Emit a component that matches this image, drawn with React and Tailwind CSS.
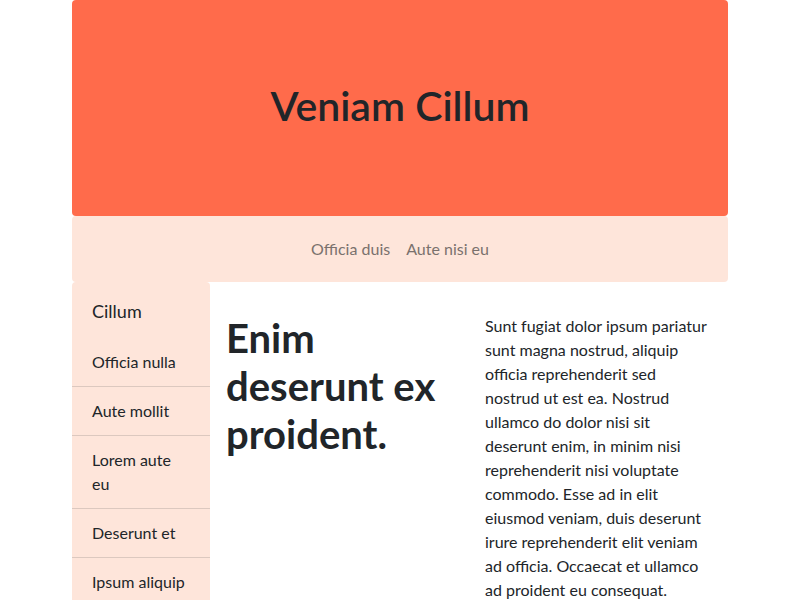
const navLinks = ["Officia duis", "Aute nisi eu"];
const sideItems = ["Officia nulla", "Aute mollit", "Lorem aute eu", "Deserunt et", "Ipsum aliquip"];

export default function App() {
    return (
        <div className="min-h-screen bg-white text-[#212529] font-['Lato','Liberation_Sans',sans-serif]">
            <div className="mx-auto w-[656px]">
                <header className="h-[216px] rounded bg-[#ff6b4b] flex items-center justify-center">
                    <h1 className="text-[41px] font-semibold leading-[1.2] -mt-1">Veniam Cillum</h1>
                </header>
                <nav className="h-[66px] rounded bg-[#fee5da] flex items-center justify-center gap-4">
                    {navLinks.map(link => (
                        <a key={link} href="#" className="text-[#7a716d] text-base">{link}</a>
                    ))}
                </nav>
                <div className="flex">
                    <aside className="w-[138px] shrink-0 rounded bg-[#fee5da]">
                        <div className="px-5 pt-4 pb-[13px] text-[18px] leading-[1.5]">Cillum</div>
                        <ul>
                            {sideItems.map((item, i) => (
                                <li key={item} className={"px-5 py-3 text-base leading-6 " + (i < sideItems.length - 1 ? "border-b border-[#dcc8bf]" : "")}>
                                    {item}
                                </li>
                            ))}
                        </ul>
                    </aside>
                    <main className="flex-1 grid grid-cols-2 pt-8">
                        <div className="px-4">
                            <h2 className="text-[40px] font-bold leading-[1.2]">Enim deserunt ex proident.</h2>
                        </div>
                        <div className="px-4">
                            <p className="text-base leading-6">
                                Sunt fugiat dolor ipsum pariatur sunt magna nostrud, aliquip officia reprehenderit sed nostrud ut est ea. Nostrud ullamco do dolor nisi sit deserunt enim, in minim nisi reprehenderit nisi voluptate commodo. Esse ad in elit eiusmod veniam, duis deserunt irure reprehenderit elit veniam ad officia. Occaecat et ullamco ad proident eu consequat.
                            </p>
                        </div>
                    </main>
                </div>
            </div>
        </div>
    );
}
